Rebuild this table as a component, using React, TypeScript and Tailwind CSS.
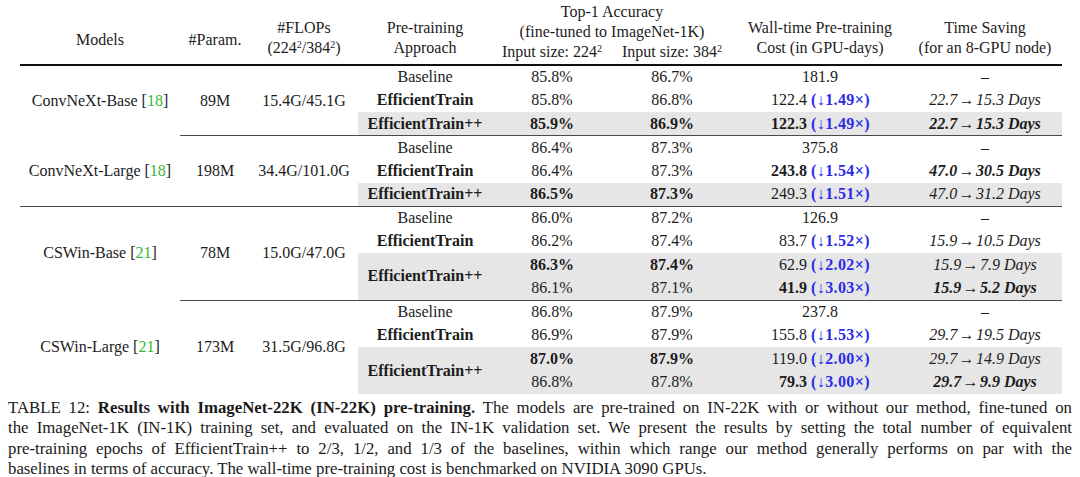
import type { FC, ReactNode } from "react";

type Row = {
  a224: string;
  b224?: boolean;
  a384: string;
  b384?: boolean;
  cost: string;
  bcost?: boolean;
  speed?: string;
  save?: string;
  bsave?: boolean;
};

type Block = {
  model: string;
  cite: string;
  param: string;
  flops: string;
  fullRule: boolean;
  last?: boolean;
  baseline: Row;
  et: Row;
  etpp: Row[];
};

const blocks: Block[] = [
  {
    model: "ConvNeXt-Base",
    cite: "18",
    param: "89M",
    flops: "15.4G/45.1G",
    fullRule: false,
    baseline: { a224: "85.8%", a384: "86.7%", cost: "181.9" },
    et: { a224: "85.8%", a384: "86.8%", cost: "122.4", speed: "1.49", save: "22.7→15.3" },
    etpp: [
      { a224: "85.9%", b224: true, a384: "86.9%", b384: true, cost: "122.3", bcost: true, speed: "1.49", save: "22.7→15.3", bsave: true },
    ],
  },
  {
    model: "ConvNeXt-Large",
    cite: "18",
    param: "198M",
    flops: "34.4G/101.0G",
    fullRule: true,
    baseline: { a224: "86.4%", a384: "87.3%", cost: "375.8" },
    et: { a224: "86.4%", a384: "87.3%", cost: "243.8", bcost: true, speed: "1.54", save: "47.0→30.5", bsave: true },
    etpp: [
      { a224: "86.5%", b224: true, a384: "87.3%", b384: true, cost: "249.3", speed: "1.51", save: "47.0→31.2" },
    ],
  },
  {
    model: "CSWin-Base",
    cite: "21",
    param: "78M",
    flops: "15.0G/47.0G",
    fullRule: false,
    baseline: { a224: "86.0%", a384: "87.2%", cost: "126.9" },
    et: { a224: "86.2%", a384: "87.4%", cost: "83.7", speed: "1.52", save: "15.9→10.5" },
    etpp: [
      { a224: "86.3%", b224: true, a384: "87.4%", b384: true, cost: "62.9", speed: "2.02", save: "15.9→7.9" },
      { a224: "86.1%", a384: "87.1%", cost: "41.9", bcost: true, speed: "3.03", save: "15.9→5.2", bsave: true },
    ],
  },
  {
    model: "CSWin-Large",
    cite: "21",
    param: "173M",
    flops: "31.5G/96.8G",
    fullRule: false,
    last: true,
    baseline: { a224: "86.8%", a384: "87.9%", cost: "237.8" },
    et: { a224: "86.9%", a384: "87.9%", cost: "155.8", speed: "1.53", save: "29.7→19.5" },
    etpp: [
      { a224: "87.0%", b224: true, a384: "87.9%", b384: true, cost: "119.0", speed: "2.00", save: "29.7→14.9" },
      { a224: "86.8%", a384: "87.8%", cost: "79.3", bcost: true, speed: "3.00", save: "29.7→9.9", bsave: true },
    ],
  },
];

const Sq: FC = () => <sup className="text-[10px]">2</sup>;

const SaveCell: FC<{ row: Row }> = ({ row }) => {
  if (!row.save) return <>–</>;
  const [from, to] = row.save.split("→");
  return (
    <span className={row.bsave ? "italic font-bold" : "italic"}>
      {from}
      <span className="not-italic font-normal">{"\u200a→\u200a"}</span>
      {to} Days
    </span>
  );
};

const BlockRows: FC<{ block: Block }> = ({ block }) => {
  const rows: { row: Row; kind: "base" | "et" | "pp"; idx: number }[] = [
    { row: block.baseline, kind: "base", idx: 0 },
    { row: block.et, kind: "et", idx: 0 },
    ...block.etpp.map((r, i) => ({ row: r, kind: "pp" as const, idx: i })),
  ];
  const n = rows.length;
  const rule = block.last ? "" : "border-b border-[#4a4a4a]";

  return (
    <>
      {rows.map(({ row, kind, idx }, i) => {
        const isLast = i === n - 1;
        const gray = kind === "pp" ? "bg-[#e6e6e6]" : "";
        const b = isLast ? rule : "";
        let approach: ReactNode = null;
        if (kind === "base") {
          approach = <td className={`text-center ${b}`}>Baseline</td>;
        } else if (kind === "et") {
          approach = <td className={`text-center font-bold ${b}`}>EfficientTrain</td>;
        } else if (idx === 0) {
          approach = (
            <td rowSpan={block.etpp.length} className={`text-center font-bold bg-[#e6e6e6] ${rule}`}>
              EfficientTrain++
            </td>
          );
        }
        return (
          <tr key={i} className="h-[23.5px]">
            {i === 0 && (
              <>
                <td rowSpan={n} className={`text-center ${block.fullRule ? rule : ""}`}>
                  {block.model} [<span className="text-[#38b538]">{block.cite}</span>]
                </td>
                <td rowSpan={n} className={`text-center ${rule}`}>{block.param}</td>
                <td rowSpan={n} className={`text-center ${rule}`}>{block.flops}</td>
              </>
            )}
            {approach}
            <td className={`text-center ${gray} ${b} ${row.b224 ? "font-bold" : ""}`}>{row.a224}</td>
            <td className={`text-center ${gray} ${b} ${row.b384 ? "font-bold" : ""}`}>{row.a384}</td>
            {row.speed ? (
              <td className={`text-right pr-[38px] whitespace-nowrap ${gray} ${b}`}>
                <span className={row.bcost ? "font-bold" : ""}>{row.cost}</span>{" "}
                <span className="font-bold text-[#2b2be8] tracking-[0.4px]">(↓{row.speed}×)</span>
              </td>
            ) : (
              <td className={`text-center ${gray} ${b}`}>{row.cost}</td>
            )}
            <td className={`text-center whitespace-nowrap ${gray} ${b}`}>
              <SaveCell row={row} />
            </td>
          </tr>
        );
      })}
    </>
  );
};

const App: FC = () => {
  const top = "border-b-2 border-[#111]";
  return (
    <div className="w-[1080px] h-[477px] overflow-hidden bg-white text-[#1c1c1c] font-['Liberation_Serif','Times_New_Roman',serif]">
      <div className="pl-[20px]">
        <table className="w-[1042px] table-fixed border-collapse text-[16px] leading-[20px]">
          <colgroup>
            <col className="w-[160px]" />
            <col className="w-[70px]" />
            <col className="w-[108px]" />
            <col className="w-[134px]" />
            <col className="w-[120px]" />
            <col className="w-[120px]" />
            <col className="w-[176px]" />
            <col className="w-[154px]" />
          </colgroup>
          <thead>
            <tr className="h-[21px]">
              <th rowSpan={3} className={`align-top pt-[30px] font-normal ${top}`}>Models</th>
              <th rowSpan={3} className={`align-top pt-[30px] font-normal ${top}`}>#Param.</th>
              <th rowSpan={3} className={`align-top pt-[18px] font-normal ${top}`}>
                #FLOPs
                <br />
                (224<Sq />/384<Sq />)
              </th>
              <th rowSpan={3} className={`align-top pt-[18px] font-normal ${top}`}>
                Pre-training
                <br />
                Approach
              </th>
              <th colSpan={2} className="align-top pt-[2px] font-normal">Top-1 Accuracy</th>
              <th rowSpan={3} className={`align-top pt-[18px] font-normal ${top}`}>
                Wall-time Pre-training
                <br />
                Cost (in GPU-days)
              </th>
              <th rowSpan={3} className={`align-top pt-[18px] font-normal ${top}`}>
                Time Saving
                <br />
                (for an 8-GPU node)
              </th>
            </tr>
            <tr className="h-[20px]">
              <th colSpan={2} className="align-top font-normal whitespace-nowrap">(fine-tuned to ImageNet-1K)</th>
            </tr>
            <tr className="h-[23px]">
              <th className={`align-top font-normal whitespace-nowrap ${top}`}>
                Input size: 224<Sq />
              </th>
              <th className={`align-top font-normal whitespace-nowrap ${top}`}>
                Input size: 384<Sq />
              </th>
            </tr>
          </thead>
          <tbody>
            {blocks.map((block) => (
              <BlockRows key={block.model} block={block} />
            ))}
          </tbody>
        </table>
      </div>

      <div className="mt-[4px] px-[8px] w-[1080px] text-[16.8px] leading-[20.4px] text-[#1a1a1a]">
        <div className="text-justify [text-align-last:justify] whitespace-nowrap">
          TABLE 12: <b>Results with ImageNet-22K (IN-22K) pre-training.</b> The models are pre-trained on IN-22K with or without our method, fine-tuned on
        </div>
        <div className="text-justify [text-align-last:justify] whitespace-nowrap">
          the ImageNet-1K (IN-1K) training set, and evaluated on the IN-1K validation set. We present the results by setting the total number of equivalent
        </div>
        <div className="text-justify [text-align-last:justify] whitespace-nowrap">
          pre-training epochs of EfficientTrain++ to 2/3, 1/2, and 1/3 of the baselines, within which range our method generally performs on par with the
        </div>
        <div className="whitespace-nowrap">
          baselines in terms of accuracy. The wall-time pre-training cost is benchmarked on NVIDIA 3090 GPUs.
        </div>
      </div>
    </div>
  );
};

export default App;
